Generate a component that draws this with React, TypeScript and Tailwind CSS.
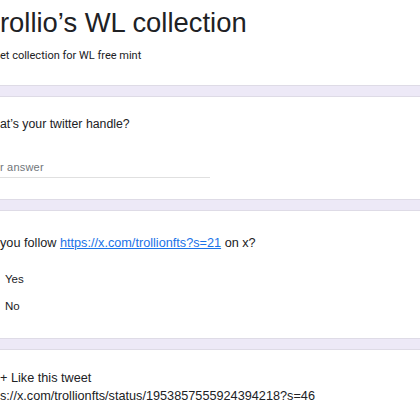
const FONT = { fontFamily: '"Liberation Sans", Arial, sans-serif' }

function Card({ className, children }: { className: string; children: React.ReactNode }) {
  return (
    <div className={`bg-white border-y border-[#dedbe6] flex flex-col overflow-hidden ${className}`}>
      {children}
    </div>
  )
}

export default function App() {
  return (
    <div
      className="w-[420px] h-[420px] overflow-hidden bg-[#ede9f7] flex flex-col gap-[10px] text-[#202124] font-['Liberation_Sans',Arial,sans-serif]"
    >
      {/* Header */}
      <Card className="h-[86px] shrink-0 border-t-0">
        <h1 className="pt-[9px] text-[27.4px] leading-[27px] whitespace-nowrap">rollio’s WL collection</h1>
        <p className="mt-[12px] text-[11px] leading-[16px] whitespace-nowrap font-['Roboto',sans-serif]">
          et collection for WL free mint
        </p>
      </Card>

      {/* Twitter handle */}
      <Card className="h-[104px] shrink-0">
        <p className="pt-[19px] text-[12.3px] leading-[16px] whitespace-nowrap">at’s your twitter handle?</p>
        <div className="mt-[28px] w-[210px] border-b border-[#e0e0e0] pb-[3px]">
          <span className="block text-[11px] leading-[14px] text-[#70757a] tracking-[0.2px]">r answer</span>
        </div>
      </Card>

      {/* Follow */}
      <Card className="h-[129px] shrink-0">
        <p className="pt-[24px] text-[12.7px] leading-[16px] whitespace-nowrap">
          you follow{' '}
          <a href="#" className="text-[#1a73e8] underline">https://x.com/trollionfts?s=21</a>{' '}
          on x?
        </p>
        <div className="mt-[20px] flex flex-col gap-[11px] pl-[5px] text-[11.5px] leading-[16px]">
          <span>Yes</span>
          <span>No</span>
        </div>
      </Card>

      {/* Like tweet */}
      <Card className="flex-1 border-b-0" >
        <div style={FONT} className="pt-[20px] flex flex-col gap-[2px] text-[12.7px] leading-[16px] whitespace-nowrap">
          <span>+ Like this tweet</span>
          <span>s://x.com/trollionfts/status/1953857555924394218?s=46</span>
        </div>
      </Card>
    </div>
  )
}
